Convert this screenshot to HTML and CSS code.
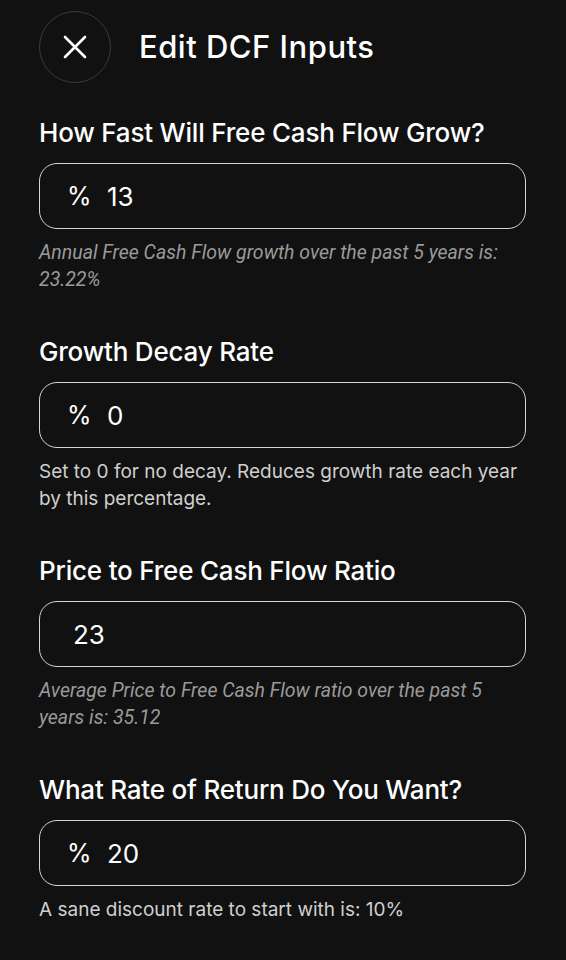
FILE: index.html
```html
<!DOCTYPE html>
<html lang="en">
<head>
    <meta charset="UTF-8">
    <meta name="viewport" content="width=device-width, initial-scale=1.0">
    <title>Edit DCF Inputs</title>
    <link rel="stylesheet" href="styles.css">
</head>
<body>
    <div class="page">
        <!-- Header -->
        <div class="header">
            <button class="close-button" aria-label="Close">
                <svg width="24" height="24" viewBox="0 0 24 24">
                    <path d="M2 2 L22 22 M22 2 L2 22" stroke="#fff" stroke-width="2.6" stroke-linecap="round" fill="none"/>
                </svg>
            </button>
            <h1>Edit DCF Inputs</h1>
        </div>

        <div class="section">
            <label class="field-label">How Fast Will Free Cash Flow Grow?</label>
            <div class="field">
                <span class="prefix">%</span>
                <input class="value" type="text" value="13">
            </div>
            <p class="hint hint-muted">Annual Free Cash Flow growth over the past 5 years is: 23.22%</p>
        </div>

        <div class="section">
            <label class="field-label">Growth Decay Rate</label>
            <div class="field">
                <span class="prefix">%</span>
                <input class="value" type="text" value="0">
            </div>
            <p class="hint">Set to 0 for no decay. Reduces growth rate each year by this percentage.</p>
        </div>

        <div class="section">
            <label class="field-label">Price to Free Cash Flow Ratio</label>
            <div class="field">
                <input class="value no-prefix" type="text" value="23">
            </div>
            <p class="hint hint-muted">Average Price to Free Cash Flow ratio over the past 5 years is: 35.12</p>
        </div>

        <div class="section">
            <label class="field-label">What Rate of Return Do You Want?</label>
            <div class="field">
                <span class="prefix">%</span>
                <input class="value" type="text" value="20">
            </div>
            <p class="hint">A sane discount rate to start with is: 10%</p>
        </div>
    </div>
</body>
</html>
```

FILE: styles.css
```css
body {
    margin: 0;
    background-color: #111111;
    color: #ffffff;
    font-family: Inter, "Noto Sans", sans-serif;
}
.page {
    padding: 11px 40px 0 39px;
}

/* Header */
.header {
    display: flex;
    align-items: center;
    gap: 28px;
}
.close-button {
    width: 72px;
    height: 72px;
    border-radius: 50%;
    border: 1.5px solid #3a3a3a;
    background: transparent;
    display: flex;
    align-items: center;
    justify-content: center;
    padding: 0;
    cursor: pointer;
}
h1 {
    margin: 0 0 2px 0;
    font-size: 31px;
    font-weight: 500;
    letter-spacing: 0.5px;
}

/* Fields */
.section {
    margin-top: 35px;
}
.section + .section {
    margin-top: 44px;
}
.field-label {
    display: block;
    font-size: 26px;
    line-height: 30px;
    font-weight: 500;
    letter-spacing: -0.2px;
}
.field {
    margin-top: 15px;
    height: 66px;
    box-sizing: border-box;
    border: 1.5px solid #d4d4d4;
    border-radius: 18px;
    display: flex;
    align-items: center;
    padding-left: 27px;
}
.prefix {
    font-size: 25px;
    width: 21px;
}
.value {
    flex: 1;
    min-width: 0;
    margin-left: 19px;
    border: none;
    outline: none;
    background: transparent;
    color: #ffffff;
    font-family: Inter, sans-serif;
    font-size: 26px;
    padding: 0;
}
.value.no-prefix {
    margin-left: 6px;
}
.hint {
    margin: 10px 0 0 0;
    font-size: 19px;
    line-height: 27px;
    color: #cfcfcf;
}
.hint-muted {
    font-family: Roboto, sans-serif;
    font-size: 19.5px;
    font-style: italic;
    color: #9a9a9a;
}
```
